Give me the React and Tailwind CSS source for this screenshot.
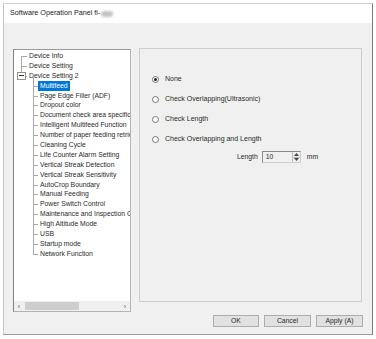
import React from "react";

const F = { fontFamily: '"Liberation Sans", Arial, sans-serif' };

const items = [
  { t: "Device Info", lvl: 0, v: "down" },
  { t: "Device Setting", lvl: 0, v: "full" },
  { t: "Device Setting 2", lvl: 0, v: "up", box: true },
  { t: "Multifeed", lvl: 1, v: "full", sel: true },
  { t: "Page Edge Filler (ADF)", lvl: 1, v: "full" },
  { t: "Dropout color", lvl: 1, v: "full" },
  { t: "Document check area specification", lvl: 1, v: "full" },
  { t: "Intelligent Multifeed Function", lvl: 1, v: "full" },
  { t: "Number of paper feeding retries", lvl: 1, v: "full" },
  { t: "Cleaning Cycle", lvl: 1, v: "full" },
  { t: "Life Counter Alarm Setting", lvl: 1, v: "full" },
  { t: "Vertical Streak Detection", lvl: 1, v: "full" },
  { t: "Vertical Streak Sensitivity", lvl: 1, v: "full" },
  { t: "AutoCrop Boundary", lvl: 1, v: "full" },
  { t: "Manual Feeding", lvl: 1, v: "full" },
  { t: "Power Switch Control", lvl: 1, v: "full" },
  { t: "Maintenance and Inspection Cycle", lvl: 1, v: "full" },
  { t: "High Altitude Mode", lvl: 1, v: "full" },
  { t: "USB", lvl: 1, v: "full" },
  { t: "Startup mode", lvl: 1, v: "full" },
  { t: "Network Function", lvl: 1, v: "up" },
];

function TreeRow({ it }) {
  const x = it.lvl === 0 ? 7 : 19;
  return (
    <div
      className={`relative h-[9.9px] flex items-center whitespace-nowrap ${
        it.lvl === 0 ? "pl-[13px]" : "pl-[24px]"
      }`}
    >
      {it.v === "full" && (
        <span className="absolute top-0 bottom-0 w-px bg-[#a8a8a8]" style={{ left: x }} />
      )}
      {it.v === "down" && (
        <span className="absolute top-1/2 bottom-0 w-px bg-[#a8a8a8]" style={{ left: x }} />
      )}
      {it.v === "up" && (
        <span className="absolute top-0 h-1/2 w-px bg-[#a8a8a8]" style={{ left: x }} />
      )}
      {it.lvl === 1 && (
        <span className="absolute top-1/2 left-[19px] w-[5px] h-px bg-[#a8a8a8]" />
      )}
      {it.lvl === 0 && (
        <span className="absolute top-1/2 left-[7px] w-[6px] h-px bg-[#a8a8a8]" />
      )}
      {it.box && (
        <span className="absolute left-[3px] top-[1px] w-[9px] h-[8px] border border-[#919191] bg-white flex items-center justify-center">
          <span className="w-[5px] h-px bg-[#333]" />
        </span>
      )}
      {it.box && (
        <span className="absolute left-[19px] top-1/2 bottom-0 w-px bg-[#a8a8a8]" />
      )}
      <span
        className={`px-[2px] leading-[9.9px] ${
          it.sel ? "bg-[#0078d7] text-white" : "text-[#2a2a2a]"
        }`}
      >
        {it.t}
      </span>
    </div>
  );
}

function Radio({ checked, label }) {
  return (
    <div className="flex items-center h-[10px]">
      <span className="w-[7px] h-[7px] rounded-full border border-[#777] bg-white flex items-center justify-center">
        {checked && <span className="w-[3px] h-[3px] rounded-full bg-[#222]" />}
      </span>
      <span className="ml-[6px] text-[#2a2a2a]">{label}</span>
    </div>
  );
}

function Btn({ children, w }) {
  return (
    <div
      className={`h-[12px] ${w} border border-[#adadad] bg-[#e1e1e1] flex items-center justify-center text-[#2a2a2a]`}
    >
      {children}
    </div>
  );
}

export default function App() {
  return (
    <div className="w-[376px] h-[339px] bg-white overflow-hidden pt-[3px] pl-[3px]" style={F}>
      <div className="w-[370px] h-[332px] border-t border-l border-t-[#d0d0d0] border-l-[#c6c6c6] border-r border-r-[#7a7a7a] border-b border-b-[#9a9a9a] flex flex-col text-[6.8px]">
        <div className="h-[19px] bg-white flex items-center pl-[6px] shrink-0">
          <span className="text-[7.2px] text-[#222]">Software Operation Panel fi-</span>
          <span className="ml-[1px] w-[12px] h-[6px] bg-[#c4c4c4] blur-[1px] rounded-sm" />
        </div>
        <div className="flex-1 bg-[#f0f0f0] flex items-start">
          {/* tree */}
          <div className="ml-[9px] mt-[26px] w-[118px] h-[263px] bg-white border border-[#b4b4b4] border-l-[#828282] border-t-[#9a9a9a] flex flex-col overflow-hidden">
            <div className="flex-1 pt-[1px] overflow-hidden">
              {items.map((it) => (
                <TreeRow key={it.t} it={it} />
              ))}
            </div>
            <div className="h-[10px] bg-[#f0f0f0] flex items-center shrink-0">
              <span className="w-[10px] text-center text-[7px] leading-none text-[#555]">‹</span>
              <span className="ml-[1px] w-[54px] h-[8px] bg-[#cdcdcd]" />
              <span className="flex-1" />
              <span className="w-[10px] text-center text-[7px] leading-none text-[#555]">›</span>
            </div>
          </div>
          {/* right column */}
          <div className="ml-[8px] mt-[25px] flex flex-col">
            <div className="w-[223px] h-[254px] border border-[#cdcdcd] pl-[12px] pt-[25px] flex flex-col">
              <div className="flex flex-col gap-[10px] text-[7px]">
                <Radio checked label="None" />
                <Radio label="Check Overlapping(Ultrasonic)" />
                <Radio label="Check Length" />
                <Radio label="Check Overlapping and Length" />
              </div>
              <div className="flex items-center mt-[7px] ml-[85px]">
                <span className="text-[#2a2a2a]">Length</span>
                <div className="ml-[4px] w-[39px] h-[12px] bg-[#f0f0f0] border border-[#8a8a8a] border-r-[#cfcfcf] border-b-[#cfcfcf] flex">
                  <span className="flex-1 pl-[3px] leading-[10px] text-[#2a2a2a]">10</span>
                  <div className="w-[8px] flex flex-col border-l border-[#bdbdbd]">
                    <div className="flex-1 flex items-center justify-center border-b border-[#bdbdbd]">
                      <svg width="5" height="3" viewBox="0 0 5 3">
                        <path d="M0 3 L2.5 0 L5 3Z" fill="#444" />
                      </svg>
                    </div>
                    <div className="flex-1 flex items-center justify-center">
                      <svg width="5" height="3" viewBox="0 0 5 3">
                        <path d="M0 0 L2.5 3 L5 0Z" fill="#444" />
                      </svg>
                    </div>
                  </div>
                </div>
                <span className="ml-[6px] text-[#2a2a2a]">mm</span>
              </div>
            </div>
            <div className="mt-[13px] flex justify-end gap-[5px] -mr-[1px]">
              <Btn w="w-[46px]">OK</Btn>
              <Btn w="w-[47px]">Cancel</Btn>
              <Btn w="w-[47px]">Apply (A)</Btn>
            </div>
          </div>
        </div>
      </div>
    </div>
  );
}
